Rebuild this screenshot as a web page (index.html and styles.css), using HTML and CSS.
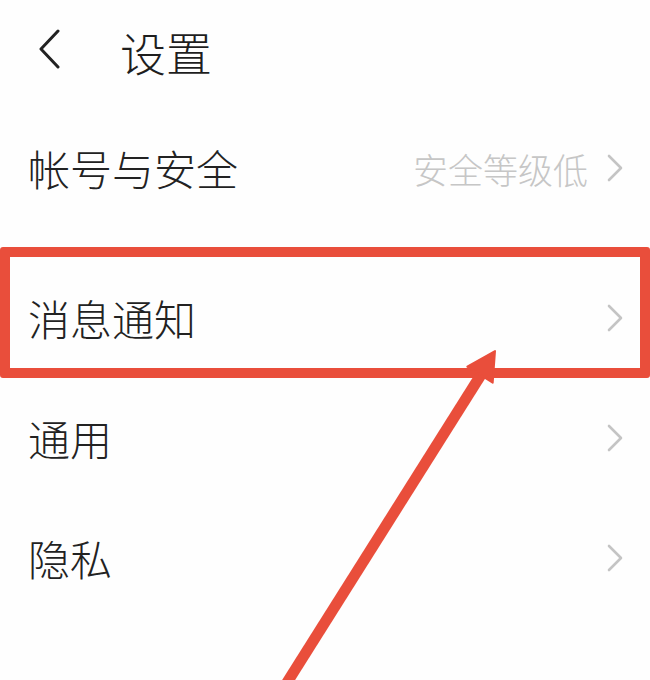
FILE: index.html
```html
<!DOCTYPE html>
<html lang="zh-CN">
<head>
<meta charset="utf-8">
<title>设置</title>
<link rel="stylesheet" href="styles.css">
</head>
<body>
<div class="screen">
  <header class="topbar">
    <svg class="back" width="24" height="40" viewBox="0 0 24 40"><path d="M20 2 L3 20 L20 38" fill="none" stroke="#222" stroke-width="3" stroke-linecap="round" stroke-linejoin="round"/></svg>
    <h1 class="title">设置</h1>
  </header>
  <ul class="list">
    <li class="row first">
      <span class="label">帐号与安全</span>
      <span class="right"><span class="value">安全等级低</span><svg class="chev" width="18" height="28" viewBox="0 0 18 28"><path d="M3 2 L15 14 L3 26" fill="none" stroke="#c4c4c4" stroke-width="2.6" stroke-linecap="round" stroke-linejoin="round"/></svg></span>
    </li>
    <li class="spacer"></li>
    <li class="row">
      <span class="label">消息通知</span>
      <span class="right"><svg class="chev" width="18" height="28" viewBox="0 0 18 28"><path d="M3 2 L15 14 L3 26" fill="none" stroke="#c4c4c4" stroke-width="2.6" stroke-linecap="round" stroke-linejoin="round"/></svg></span>
    </li>
    <li class="row">
      <span class="label">通用</span>
      <span class="right"><svg class="chev" width="18" height="28" viewBox="0 0 18 28"><path d="M3 2 L15 14 L3 26" fill="none" stroke="#c4c4c4" stroke-width="2.6" stroke-linecap="round" stroke-linejoin="round"/></svg></span>
    </li>
    <li class="row">
      <span class="label">隐私</span>
      <span class="right"><svg class="chev" width="18" height="28" viewBox="0 0 18 28"><path d="M3 2 L15 14 L3 26" fill="none" stroke="#c4c4c4" stroke-width="2.6" stroke-linecap="round" stroke-linejoin="round"/></svg></span>
    </li>
  </ul>
  <div class="highlight"></div>
  <svg class="arrow" width="650" height="680" viewBox="0 0 650 680">
    <line x1="276" y1="700" x2="484" y2="370" stroke="#e94e3b" stroke-width="11"/>
    <polygon points="495,351 492.7,382.7 467.3,366.7" fill="#e94e3b" stroke="#e94e3b" stroke-width="2" stroke-linejoin="round"/>
  </svg>
</div>
</body>
</html>
```

FILE: styles.css
```css
html, body {
  margin: 0;
  padding: 0;
  background: #fff;
}
body {
  font-family: "Noto Sans CJK SC", "Noto Sans", sans-serif;
  color: #222;
}
.screen {
  position: relative;
  width: 650px;
  height: 680px;
  overflow: hidden;
  background: #fefefe;
}
.topbar {
  height: 108px;
  display: flex;
  align-items: center;
  padding-left: 38px;
  padding-bottom: 6px;
  box-sizing: border-box;
}
.back {
  display: block;
  flex: none;
  margin-top: -4px;
}
.title {
  margin: 0 0 0 58px;
  font-size: 46px;
  font-weight: 300;
  line-height: 1;
  color: #1e1e1e;
}
.list {
  list-style: none;
  margin: 0;
  padding: 0;
}
.row {
  height: 120px;
  display: flex;
  align-items: center;
  justify-content: space-between;
  padding: 0 26px 0 28px;
  box-sizing: border-box;
}
.spacer {
  height: 30px;
}
.label {
  font-size: 42px;
  font-weight: 300;
  line-height: 1;
  color: #222;
}
.right {
  display: flex;
  align-items: center;
  gap: 18px;
}
.value {
  font-size: 35px;
  font-weight: 300;
  line-height: 1;
  color: #c6c6c6;
}
.chev {
  display: block;
}
.highlight {
  position: absolute;
  left: 0;
  top: 247px;
  width: 650px;
  height: 131px;
  box-sizing: border-box;
  border: 10px solid #e94e3b;
  border-radius: 3px;
}
.arrow {
  position: absolute;
  left: 0;
  top: 0;
  pointer-events: none;
}
```
